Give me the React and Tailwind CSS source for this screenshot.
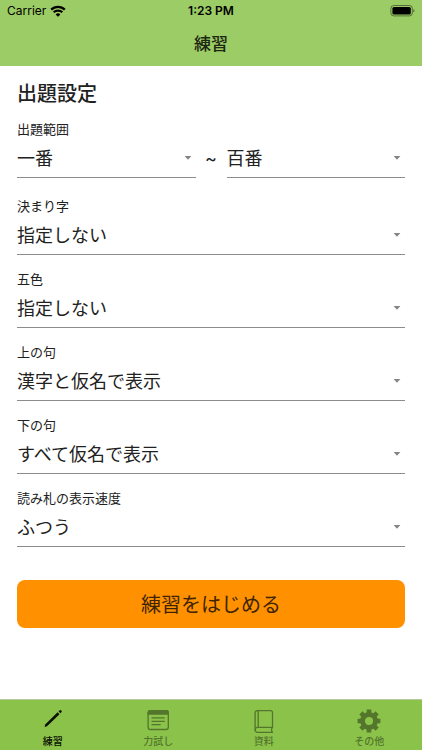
import React, { useState } from "react";

function Caret() {
  return (
    <svg
      viewBox="0 0 8 4"
      className="pointer-events-none absolute right-1 top-[17px] h-1 w-2 fill-[#858585]"
      aria-hidden="true"
    >
      <path d="M0.6 0h6.8L4 3.8z" />
    </svg>
  );
}

function SelectBox({ id, options, label }) {
  return (
    <div className="relative min-w-0 flex-1">
      <select
        id={id}
        aria-label={label}
        defaultValue={options[0]}
        className="block h-[39px] w-full appearance-none rounded-none border-0 border-b border-[#8c8c8c] bg-transparent p-0 pr-5 pb-0.5 text-[18px] leading-6 text-[#212121] outline-none"
      >
        {options.map((o) => (
          <option key={o}>{o}</option>
        ))}
      </select>
      <Caret />
    </div>
  );
}

function Field({ id, label, options }) {
  return (
    <div>
      <label htmlFor={id} className="block text-[13px] leading-5">
        {label}
      </label>
      <SelectBox id={id} options={options} />
    </div>
  );
}

const fields = [
  { id: "kimariji", label: "決まり字", options: ["指定しない", "一字決まり", "二字決まり"] },
  { id: "color", label: "五色", options: ["指定しない", "青", "桃", "黄", "緑", "橙"] },
  { id: "kami", label: "上の句", options: ["漢字と仮名で表示", "すべて仮名で表示"] },
  { id: "shimo", label: "下の句", options: ["すべて仮名で表示", "漢字と仮名で表示"] },
  { id: "speed", label: "読み札の表示速度", options: ["ふつう", "おそめ", "はやめ"] },
];

const PencilIcon = () => (
  <svg viewBox="0 0 24 24" className="size-6" fill="currentColor" aria-hidden="true">
    <path d="M3.6 17.9l.6-2.4L16.6 3.3l1.9 1.9L6 17.3z" />
    <path d="M17.5 2.4l1-1a1.4 1.4 0 0 1 1.9 0 1.4 1.4 0 0 1 0 1.9l-1 1z" />
  </svg>
);

const CardIcon = () => (
  <svg viewBox="0 0 24 24" className="size-6" fill="none" stroke="currentColor" aria-hidden="true">
    <rect x="2.1" y="1.7" width="20.2" height="18.8" rx="2.2" strokeWidth="1.3" />
    <path d="M1.5 5.8V3.4A2.4 2.4 0 0 1 3.9 1h16.6a2.4 2.4 0 0 1 2.4 2.4v2.4z" fill="currentColor" stroke="none" />
    <path d="M6 8.9h12.4M6 12.3h12.4M6 15.7h8.2" strokeWidth="1.2" strokeLinecap="round" />
  </svg>
);

const BookIcon = () => (
  <svg
    viewBox="0 0 24 24"
    className="size-6"
    fill="none"
    stroke="currentColor"
    strokeWidth="1.3"
    strokeLinejoin="round"
    strokeLinecap="round"
    aria-hidden="true"
  >
    <path d="M20.5 18.4H5.6A2.5 2.5 0 0 0 3.1 20.9V3.8a2.2 2.2 0 0 1 2.2-2.2h13.2a2 2 0 0 1 2 2z" />
    <path d="M3.1 20.9a2.4 2.4 0 0 0 2.5 2.4h14.9c-1.3-1.2-1.3-3.7 0-4.9M6.2 1.7v16.6" />
  </svg>
);

const GearIcon = () => (
  <svg viewBox="0 0 24 24" className="size-6" fill="none" stroke="currentColor" aria-hidden="true">
    <circle cx="12" cy="12" r="6.5" strokeWidth="4.8" />
    <path
      d="M12 .6v3.4M12 20v3.4M.6 12H4M20 12h3.4M3.9 3.9l2.4 2.4M17.7 17.7l2.4 2.4M3.9 20.1l2.4-2.4M17.7 6.3l2.4-2.4"
      strokeWidth="4.6"
    />
  </svg>
);

const tabs = [
  { name: "練習", Icon: PencilIcon },
  { name: "力試し", Icon: CardIcon },
  { name: "資料", Icon: BookIcon },
  { name: "その他", Icon: GearIcon },
];

function StatusBar() {
  return (
    <div className="grid h-[22px] grid-cols-3 items-center px-[7px] font-['Inter','Liberation_Sans',sans-serif] text-xs text-black">
      <div className="flex items-center gap-1">
        <span>Carrier</span>
        <svg viewBox="0 0 16 12" className="h-3 w-4" fill="none" stroke="currentColor" strokeWidth="2.2" aria-hidden="true">
          <path d="M1.2 4.6a9.6 9.6 0 0 1 13.6 0M3.7 7.3a6.1 6.1 0 0 1 8.6 0" />
          <path d="M8 11.8L5.6 9.4a3.4 3.4 0 0 1 4.8 0z" fill="currentColor" stroke="none" />
        </svg>
      </div>
      <div className="text-center font-semibold">1:23 PM</div>
      <svg viewBox="0 0 25 12" className="h-3 w-[25px] justify-self-end" aria-hidden="true">
        <rect x="0.9" y="0.5" width="21.4" height="10.4" rx="2.8" fill="none" stroke="#000" strokeOpacity="0.45" />
        <rect x="2.4" y="2" width="18.4" height="7.4" rx="1.5" fill="#000" />
        <path d="M23.4 3.9c1.5.6 1.5 3 0 3.6z" fill="#000" fillOpacity="0.5" />
      </svg>
    </div>
  );
}

export default function App() {
  const [active, setActive] = useState("練習");
  return (
    <div lang="ja" className="flex min-h-screen flex-col bg-white font-['Noto_Sans_CJK_JP',sans-serif] text-[#212121]">
      <header className="bg-[#9ccc65]">
        <StatusBar />
        <h1 className="flex h-11 items-center justify-center pb-0.5 text-[17px] font-medium leading-6 text-[#1c2612]">
          練習
        </h1>
      </header>

      <main className="flex-1 px-[17px] pt-[13px]">
        <h2 className="text-xl font-medium leading-7">出題設定</h2>

        <form className="mt-3" onSubmit={(e) => e.preventDefault()}>
          <label htmlFor="from" className="block text-[13px] leading-5">
            出題範囲
          </label>
          <div className="flex items-center">
            <SelectBox id="from" options={["一番", "二番", "三番"]} />
            <span className="w-[31px] text-center font-['Inter',sans-serif] text-[18px] leading-6">~</span>
            <SelectBox id="to" label="出題範囲の終わり" options={["百番", "九十九番", "九十八番"]} />
          </div>

          <div className="mt-[18px] flex flex-col gap-3.5">
            {fields.map((f) => (
              <Field key={f.id} {...f} />
            ))}
          </div>

          <button
            type="submit"
            className="mt-[33px] h-12 w-full rounded-lg bg-[#ff9100] text-xl leading-7 text-[#3e2403]"
          >
            練習をはじめる
          </button>
        </form>
      </main>

      <nav className="flex h-[51px] border-t border-[#b5c79f] bg-[#8bc34a]">
        {tabs.map(({ name, Icon }) => (
          <button
            key={name}
            type="button"
            onClick={() => setActive(name)}
            aria-current={active === name ? "page" : undefined}
            className={
              active === name
                ? "flex flex-1 flex-col items-center pt-[9px] text-[#0c1203]"
                : "flex flex-1 flex-col items-center pt-[9px] text-[#53752c]"
            }
          >
            <Icon />
            <span className="text-[10px] font-medium leading-4">{name}</span>
          </button>
        ))}
      </nav>
    </div>
  );
}
